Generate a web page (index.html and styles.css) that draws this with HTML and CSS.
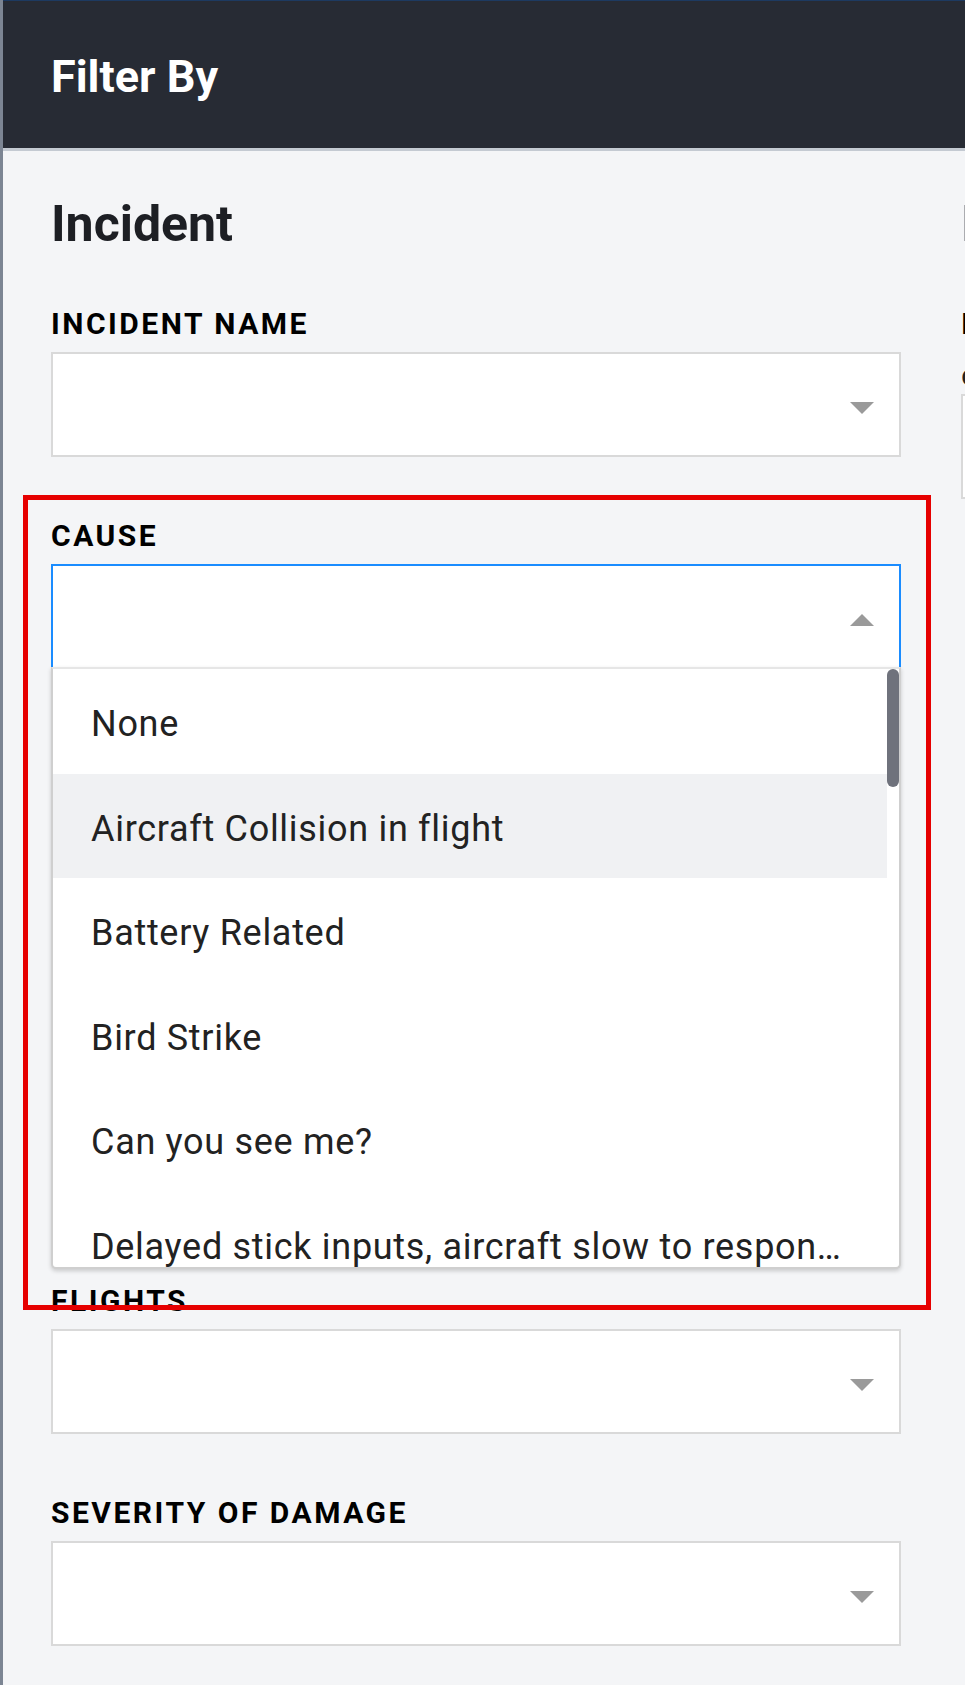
FILE: index.html
```html
<!DOCTYPE html>
<html lang="en">
<head>
<meta charset="utf-8">
<title>Filter By</title>
<link rel="stylesheet" href="styles.css">
</head>
<body>
<div class="page">
  <header class="topbar">
    <h1 class="topbar-title">Filter By</h1>
  </header>
  <main class="content">
    <div class="columns">
      <section class="col">
        <h2 class="section-title">Incident</h2>
        <div class="field">
          <label class="field-label">INCIDENT NAME</label>
          <div class="select"><span class="caret"></span></div>
        </div>
        <div class="field">
          <label class="field-label">CAUSE</label>
          <div class="select is-open">
            <span class="caret up"></span>
            <div class="dropdown">
              <ul class="options">
                <li class="option">None</li>
                <li class="option is-active">Aircraft Collision in flight</li>
                <li class="option">Battery Related</li>
                <li class="option">Bird Strike</li>
                <li class="option">Can you see me?</li>
                <li class="option">Delayed stick inputs, aircraft slow to respond to controls</li>
              </ul>
              <span class="scroll-thumb"></span>
            </div>
          </div>
        </div>
        <div class="covered-fields" aria-hidden="true">
          <div class="select"></div>
          <div class="textbox"></div>
        </div>
        <div class="field">
          <label class="field-label">FLIGHTS</label>
          <div class="select"><span class="caret"></span></div>
        </div>
        <div class="field">
          <label class="field-label">SEVERITY OF DAMAGE</label>
          <div class="select"><span class="caret"></span></div>
        </div>
      </section>
      <section class="col">
        <h2 class="section-title">Investigation</h2>
        <div class="field">
          <label class="field-label">INVESTIGATOR</label>
          <p class="field-hint">optional</p>
          <div class="select"><span class="caret"></span></div>
        </div>
      </section>
    </div>
  </main>
  <div class="annotation"></div>
</div>
</body>
</html>
```
FILE: styles.css
```css
* { box-sizing: border-box; }

html, body {
  margin: 0;
  padding: 0;
}

body {
  background: #f4f5f7;
  font-family: Roboto, "Noto Sans", "Liberation Sans", sans-serif;
  overflow: hidden;
}

.page {
  position: relative;
  min-height: 1685px;
  border-left: 3px solid #7c8593;
}

.topbar {
  height: 151px;
  background: #272b34;
  border-top: 1px solid #1d3a61;
  border-bottom: 3px solid #c4cad2;
  padding-left: 48px;
}

.topbar-title {
  margin: 53px 0 0;
  font-size: 45px;
  line-height: 46px;
  font-weight: 700;
  color: #ffffff;
}

.content {
  padding-left: 48px;
  overflow: hidden;
}

.columns {
  display: grid;
  grid-template-columns: 850px 850px;
  column-gap: 60px;
  width: max-content;
}

.section-title {
  margin: 46px 0 0;
  font-size: 50px;
  line-height: 54px;
  font-weight: 700;
  color: #1d1f24;
}

.field {
  margin-top: 64px;
}

.section-title + .field {
  margin-top: 58px;
}

.field-label {
  display: block;
  margin-bottom: 13px;
  font-size: 30px;
  line-height: 30px;
  font-weight: 700;
  letter-spacing: 2.5px;
  color: #000000;
}

.field-hint {
  margin: 20px 0 3px;
  font-size: 32px;
  line-height: 32px;
  color: #222222;
}

.select {
  position: relative;
  height: 105px;
  background: #ffffff;
  border: 2px solid #d9d9d9;
}

.select.is-open {
  border-color: #1a8cff;
}

.covered-fields {
  display: flex;
  flex-direction: column;
  gap: 107px;
  margin-top: 107px;
}

.textbox {
  height: 234px;
  background: #ffffff;
  border: 2px solid #d9d9d9;
}

.caret {
  position: absolute;
  right: 25px;
  top: 50%;
  margin-top: -3px;
  width: 0;
  height: 0;
  border-left: 12px solid transparent;
  border-right: 12px solid transparent;
  border-top: 12px solid #9a9a9a;
}

.caret.up {
  border-top: 0;
  border-bottom: 12px solid #9a9a9a;
}

.dropdown {
  position: absolute;
  top: 100%;
  left: -2px;
  right: -2px;
  height: 602px;
  background: #ffffff;
  border: 2px solid #cfcfcf;
  border-top-color: #e6e6e6;
  border-radius: 0 0 5px 5px;
  box-shadow: 0 2px 4px rgba(0, 0, 0, 0.18);
  overflow: hidden;
  z-index: 5;
}

.options {
  list-style: none;
  margin: 0;
  padding: 0 12px 0 0;
}

.option {
  height: 104.5px;
  padding: 6px 36px 0 38px;
  line-height: 98.5px;
  font-size: 36px;
  letter-spacing: 0.7px;
  color: #222222;
  white-space: nowrap;
  overflow: hidden;
  text-overflow: ellipsis;
}

.option.is-active {
  background: #f0f1f3;
}

.scroll-thumb {
  position: absolute;
  top: 0;
  right: 0;
  width: 12px;
  height: 118px;
  border-radius: 6px;
  background: #6f727c;
}

.annotation {
  position: absolute;
  left: 20px;
  top: 495px;
  width: 908px;
  height: 815px;
  border: 5px solid #e60000;
  pointer-events: none;
  z-index: 10;
}
```
